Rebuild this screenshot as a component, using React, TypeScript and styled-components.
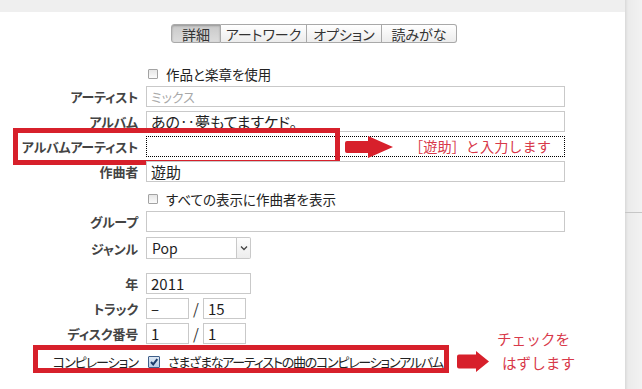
import React from 'react';
import styled, { createGlobalStyle } from 'styled-components';

const GlobalStyle = createGlobalStyle`
  html, body { margin: 0; padding: 0; background: #fff; }
  body {
    font-family: "Noto Sans CJK JP", "Noto Sans", sans-serif;
    font-feature-settings: "palt";
  }
`;

const RED = '#d7202b';
const NOTE = '#d8394a';

// block arrow: shaft of height `body`, head starting at `neck` px from the left
const Arrow = ({ w, h, body, neck }: { w: number; h: number; body: number; neck: number }) => {
  const t = (h - body) / 2;
  const d = `M2 ${t} L${neck} ${t} L${neck} 0 L${w} ${h / 2} L${neck} ${h} L${neck} ${h - t} L2 ${h - t} Q0 ${h - t} 0 ${h - t - 2} L0 ${t + 2} Q0 ${t} 2 ${t} Z`;
  return (
    <svg width={w} height={h} viewBox={`0 0 ${w} ${h}`}>
      <path d={d} fill={RED} />
    </svg>
  );
};

const Chevron = () => (
  <svg width="8" height="6" viewBox="0 0 8 6">
    <path d="M1 1.5 L4 4.5 L7 1.5" fill="none" stroke="#444" strokeWidth="1.3" />
  </svg>
);

const Tick = () => (
  <svg width="10" height="10" viewBox="0 0 10 10">
    <path d="M2 5 L4.2 7.4 L8.3 2.2" fill="none" stroke="#1d3d6b" strokeWidth="2" />
  </svg>
);

const App: () => React.ReactElement = () => (
  <Screen>
    <GlobalStyle />
    <Panel>
      <TopBand />
      <TabBar>
        <Tab $w={50} $active>詳細</Tab>
        <Tab $w={86}>アートワーク</Tab>
        <Tab $w={75}>オプション</Tab>
        <Tab $w={75}>読みがな</Tab>
      </TabBar>

      <Form>
        <Row $h={16} $mt={21}>
          <Label />
          <CheckLine>
            <Box />
            作品と楽章を使用
          </CheckLine>
        </Row>
        <Row $mt={6}>
          <Label>アーティスト</Label>
          <Field $placeholder>ミックス</Field>
        </Row>
        <Row>
          <Label>アルバム</Label>
          <Field>あの‥夢もてますケド。</Field>
        </Row>
        <Row $mt={4}>
          <Label>アルバムアーティスト</Label>
          <Field $dotted />
          <RedFrame $left={13} $top={-8} $w={327} $h={37} />
          <Pointer $left={345} $top={0}>
            <Arrow w={48} h={22} body={12} neck={23} />
          </Pointer>
          <Note $left={409} $top={-1}>［遊助］と入力します</Note>
        </Row>
        <Row>
          <Label>作曲者</Label>
          <Field>遊助</Field>
        </Row>
        <Row $h={16} $mt={7}>
          <Label />
          <CheckLine>
            <Box />
            すべての表示に作曲者を表示
          </CheckLine>
        </Row>
        <Row $mt={6}>
          <Label>グループ</Label>
          <Field />
        </Row>
        <Row $h={22} $mt={5}>
          <Label>ジャンル</Label>
          <Select>
            <SelectValue>Pop</SelectValue>
            <DropButton>
              <Chevron />
            </DropButton>
          </Select>
        </Row>
        <Row $mt={14}>
          <Label>年</Label>
          <Field $w={105}>2011</Field>
        </Row>
        <Row>
          <Label>トラック</Label>
          <Pair>
            <Field $w={43}>–</Field>
            <Slash>/</Slash>
            <Field $w={43}>15</Field>
          </Pair>
        </Row>
        <Row>
          <Label>ディスク番号</Label>
          <Pair>
            <Field $w={43}>1</Field>
            <Slash>/</Slash>
            <Field $w={43}>1</Field>
          </Pair>
        </Row>
        <Row $h={16} $mt={8}>
          <Label $plain>コンピレーション</Label>
          <CheckLine $narrow>
            <Box $checked>
              <Tick />
            </Box>
            さまざまなアーティストの曲のコンピレーションアルバム
          </CheckLine>
          <RedFrame $left={33} $top={-7} $w={416} $h={28} />
          <Pointer $left={457} $top={-1}>
            <Arrow w={32} h={21} body={14} neck={19} />
          </Pointer>
          <NoteBlock $left={497} $top={-25}>
            <NoteLine>チェックを</NoteLine>
            <NoteLine $indent={5}>はずします</NoteLine>
          </NoteBlock>
        </Row>
      </Form>
    </Panel>
    <SideStrip>
      <SideRule />
    </SideStrip>
  </Screen>
);

export default App;

const Screen = styled.div`
  display: flex;
  width: 642px;
  height: 389px;
  overflow: hidden;
  background: #fff;
`;

const Panel = styled.div`
  flex: 1;
  display: flex;
  flex-direction: column;
`;

const TopBand = styled.div`
  height: 12px;
  background: #efefef;
`;

const TabBar = styled.div`
  display: flex;
  margin: 12px 0 0 171px;
`;

const Tab = styled.div<{ $w: number; $active?: boolean }>`
  width: ${({ $w }) => $w}px;
  height: 19px;
  box-sizing: border-box;
  display: flex;
  align-items: center;
  justify-content: center;
  font-size: 14px;
  color: #333;
  border: 1px solid #a9a9a9;
  border-left-width: 0;
  background: ${({ $active }) =>
    $active
      ? 'linear-gradient(#c9c9c9, #dcdcdc)'
      : 'linear-gradient(#ffffff, #ececec)'};
  box-shadow: ${({ $active }) => ($active ? 'inset 0 1px 2px rgba(0,0,0,0.25)' : 'none')};

  &:first-child {
    border-left-width: 1px;
    border-radius: 3px 0 0 3px;
  }
  &:last-child {
    border-radius: 0 3px 3px 0;
  }
`;

const Form = styled.div`
  width: 565px;
  display: flex;
  flex-direction: column;
`;

const Row = styled.div<{ $h?: number; $mt?: number }>`
  position: relative;
  display: grid;
  grid-template-columns: 138px 1fr;
  column-gap: 8px;
  align-items: center;
  height: ${({ $h }) => $h ?? 21}px;
  margin-top: ${({ $mt }) => $mt ?? 4}px;
`;

const Label = styled.span<{ $plain?: boolean }>`
  text-align: right;
  white-space: nowrap;
  font-size: 13px;
  line-height: 1;
  font-weight: ${({ $plain }) => ($plain ? 400 : 700)};
  letter-spacing: ${({ $plain }) => ($plain ? '-1px' : '-0.2px')};
  color: ${({ $plain }) => ($plain ? '#222' : '#444')};
`;

const Field = styled.div<{ $w?: number; $dotted?: boolean; $placeholder?: boolean }>`
  box-sizing: border-box;
  width: ${({ $w }) => ($w ? `${$w}px` : '100%')};
  height: 21px;
  padding: 0 4px;
  display: flex;
  align-items: center;
  border: 1px ${({ $dotted }) => ($dotted ? 'dotted #000' : 'solid #c9c9c9')};
  background: #fff;
  font-size: ${({ $placeholder }) => ($placeholder ? 13 : 15)}px;
  color: ${({ $placeholder }) => ($placeholder ? '#a8a8a8' : '#1e1e1e')};
  white-space: nowrap;
`;

const CheckLine = styled.div<{ $narrow?: boolean }>`
  display: flex;
  align-items: center;
  gap: 8px;
  margin-left: 2px;
  font-size: ${({ $narrow }) => ($narrow ? 13 : 13.5)}px;
  letter-spacing: ${({ $narrow }) => ($narrow ? '-1.25px' : '0')};
  color: #222;
  white-space: nowrap;
`;

const Box = styled.span<{ $checked?: boolean }>`
  box-sizing: border-box;
  display: inline-flex;
  align-items: center;
  justify-content: center;
  flex: none;
  width: ${({ $checked }) => ($checked ? 12 : 10)}px;
  height: ${({ $checked }) => ($checked ? 12 : 10)}px;
  border: 1px solid ${({ $checked }) => ($checked ? '#3f5f8a' : '#a3a3a3')};
  border-radius: 1px;
  background: ${({ $checked }) =>
    $checked ? 'linear-gradient(#dfe9f5, #b8cde6)' : 'linear-gradient(#e6e6e6, #fbfbfb)'};
`;

const Select = styled.div`
  display: flex;
  height: 22px;
  width: 105px;
`;

const SelectValue = styled.div`
  box-sizing: border-box;
  width: 91px;
  height: 100%;
  padding: 0 5px;
  display: flex;
  align-items: center;
  border: 1px solid #c9c9c9;
  font-size: 14px;
  color: #1e1e1e;
`;

const DropButton = styled.div`
  box-sizing: border-box;
  width: 14px;
  height: 100%;
  display: flex;
  align-items: center;
  justify-content: center;
  border: 1px solid #c9c9c9;
  border-left: none;
  border-radius: 0 2px 2px 0;
  background: linear-gradient(#fdfdfd, #ededed);
`;

const Pair = styled.div`
  display: flex;
  align-items: center;
`;

const Slash = styled.span`
  width: 14px;
  text-align: center;
  font-size: 15px;
  color: #333;
`;

const RedFrame = styled.div<{ $left: number; $top: number; $w: number; $h: number }>`
  position: absolute;
  box-sizing: border-box;
  left: ${({ $left }) => $left}px;
  top: ${({ $top }) => $top}px;
  width: ${({ $w }) => $w}px;
  height: ${({ $h }) => $h}px;
  border: 5px solid ${RED};
  pointer-events: none;
`;

const Pointer = styled.div<{ $left: number; $top: number }>`
  position: absolute;
  left: ${({ $left }) => $left}px;
  top: ${({ $top }) => $top}px;
  display: flex;
`;

const Note = styled.span<{ $left: number; $top: number }>`
  position: absolute;
  left: ${({ $left }) => $left}px;
  top: ${({ $top }) => $top}px;
  line-height: 22px;
  font-size: 14.2px;
  font-feature-settings: normal;
  color: ${NOTE};
  white-space: nowrap;
`;

const NoteBlock = styled.div<{ $left: number; $top: number }>`
  position: absolute;
  left: ${({ $left }) => $left}px;
  top: ${({ $top }) => $top}px;
  display: flex;
  flex-direction: column;
  font-size: 14.6px;
  font-feature-settings: normal;
  line-height: 24px;
  color: ${NOTE};
  white-space: nowrap;
`;

const NoteLine = styled.span<{ $indent?: number }>`
  padding-left: ${({ $indent }) => $indent ?? 0}px;
`;

const SideStrip = styled.div`
  width: 17px;
  flex: none;
  background: linear-gradient(to right, #d9d9d9 0, #ebebeb 3px, #f2f2f2 100%);
`;

const SideRule = styled.div`
  margin-top: 212px;
  height: 1px;
  background: #c6c6c6;
`;
